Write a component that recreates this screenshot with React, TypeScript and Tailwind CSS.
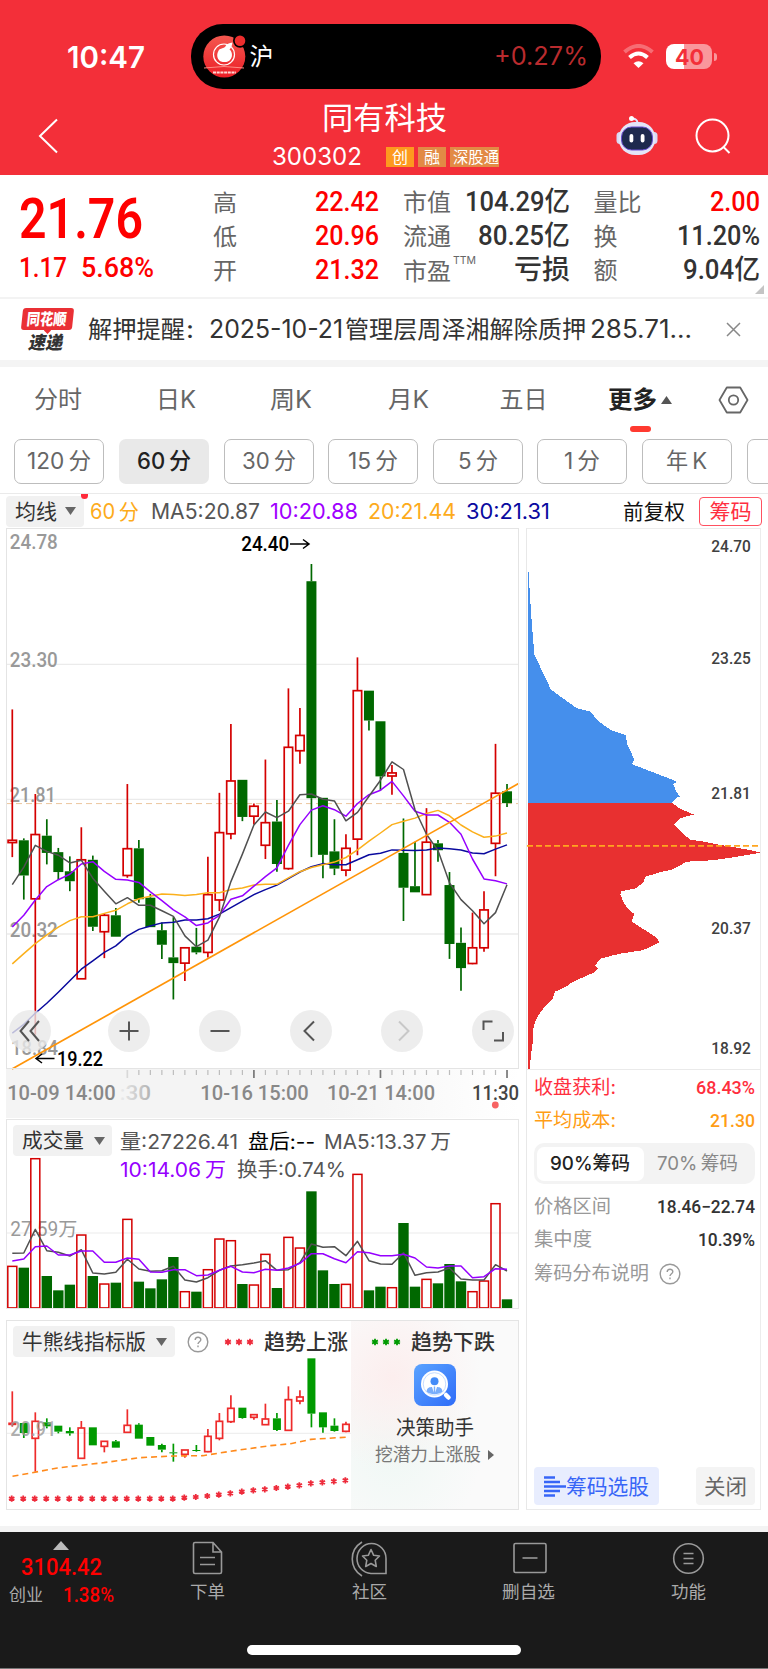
import { useLayoutEffect, useRef } from "react";
import type { ReactNode } from "react";

/* Text that is condensed or widened to fill the width of its box. */
function Fit({ className = "", children }: { className?: string; children: ReactNode }) {
  const outer = useRef<HTMLSpanElement>(null);
  const inner = useRef<HTMLSpanElement>(null);
  useLayoutEffect(() => {
    if (!outer.current || !inner.current) return;
    const ratio = outer.current.offsetWidth / inner.current.getBoundingClientRect().width;
    inner.current.style.transform = `scaleX(${ratio})`;
  }, []);
  return (
    <span className={`block shrink-0 whitespace-nowrap leading-none ${className}`}>
      <span ref={outer} className="block w-full">
        <span ref={inner} className="inline-block origin-left whitespace-pre align-top">{children}</span>
      </span>
    </span>
  );
}

const num = "font-['Roboto','Noto_Sans_CJK_SC',sans-serif]";

function Label({ x, y, w, size, fill, weight = 500, children }: { x: number; y: number; w: number; size: number; fill: string; weight?: number; children: string }) {
  return (
    <text x={x} y={y} textLength={w} lengthAdjust="spacingAndGlyphs" fontSize={size} fill={fill} fontWeight={weight} fontFamily="Roboto, 'Noto Sans CJK SC', sans-serif">
      {children}
    </text>
  );
}

type Candle = [string, number, number, number, number];
const X = (i: number) => 12.3 + 11.505 * i;

const candles: Candle[] = [
  ["R", 837, 843, 495, 881], ["G", 837, 929, 832, 992], ["R", 822, 990, 716, 1345], ["G", 825, 870, 782, 900],
  ["G", 868, 920, 857, 941], ["G", 918, 944, 879, 970], ["R", 888, 1199, 803, 1199], ["G", 888, 1063, 877, 1074],
  ["R", 1033, 1076, 1027, 1145], ["G", 1033, 1089, 1014, 1089], ["R", 859, 929, 690, 935], ["G", 858, 991, 836, 1000],
  ["G", 987, 1064, 977, 1064], ["G", 1072, 1110, 1052, 1147], ["G", 1143, 1158, 1038, 1253], ["R", 1118, 1158, 1118, 1205],
  ["G", 1115, 1130, 1066, 1135], ["R", 979, 1130, 880, 1143], ["R", 817, 993, 713, 1022], ["R", 682, 820, 533, 834],
  ["G", 679, 776, 679, 787], ["R", 748, 774, 741, 796], ["R", 791, 850, 626, 886], ["G", 788, 899, 732, 919],
  ["R", 594, 911, 440, 914], ["R", 563, 603, 491, 637], ["G", 160, 727, 115, 881], ["G", 726, 875, 726, 936],
  ["G", 866, 911, 782, 928], ["R", 858, 915, 821, 931], ["R", 446, 834, 359, 876], ["G", 446, 524, 446, 550],
  ["G", 526, 670, 526, 707], ["R", 661, 669, 640, 718], ["G", 870, 961, 780, 1048], ["G", 957, 973, 841, 973],
  ["R", 842, 979, 753, 979], ["G", 845, 863, 836, 893], ["G", 954, 1108, 920, 1147], ["G", 1105, 1171, 1065, 1230],
  ["R", 1118, 1159, 1026, 1161], ["R", 1019, 1118, 970, 1128], ["R", 714, 845, 585, 931], ["G", 709, 740, 690, 750],
];
const ma5 = [953, 907, 850, 866, 876, 896, 889, 936, 970, 1003, 987, 1007, 1007, 1021, 1036, 1087, 1115, 1098, 1038, 945, 873, 797, 763, 778, 761, 718, 716, 730, 734, 786, 764, 722, 680, 632, 652, 757, 821, 864, 948, 992, 1021, 1055, 1026, 953];
const ma10 = [1064, 1033, 993, 958, 940, 926, 899, 893, 918, 939, 941, 947, 972, 995, 1019, 1037, 1060, 1053, 1033, 991, 982, 957, 932, 909, 850, 796, 758, 747, 757, 774, 741, 718, 706, 683, 721, 761, 771, 771, 790, 821, 886, 938, 943, 951];
const ma20 = [1160, 1133, 1107, 1084, 1064, 1047, 1037, 1037, 1028, 1020, 1003, 990, 983, 977, 979, 981, 979, 974, 974, 966, 962, 954, 952, 952, 935, 919, 908, 901, 894, 882, 862, 839, 818, 796, 787, 779, 767, 759, 773, 797, 815, 829, 826, 818];
const ma30 = [1341, 1318, 1289, 1263, 1234, 1204, 1174, 1152, 1130, 1113, 1087, 1070, 1061, 1053, 1051, 1045, 1045, 1042, 1030, 1013, 996, 979, 966, 954, 937, 920, 906, 898, 901, 901, 888, 875, 871, 862, 863, 864, 862, 857, 859, 862, 870, 872, 860, 849];
const volumes = [617, 623, 294, 648, 691, 674, 523, 648, 670, 668, 476, 665, 685, 658, 591, 693, 695, 627, 535, 540, 672, 673, 581, 684, 530, 562, 394, 631, 672, 671, 341, 691, 680, 681, 489, 680, 656, 670, 612, 664, 693, 661, 429, 718];
const vol5 = [580, 579, 508, 572, 577, 588, 569, 639, 642, 637, 598, 627, 634, 632, 619, 660, 666, 653, 631, 618, 614, 609, 602, 631, 629, 608, 552, 562, 560, 587, 544, 602, 612, 613, 578, 646, 638, 636, 624, 657, 660, 660, 614, 633];
const vol10 = [603, 597, 560, 558, 585, 585, 573, 573, 607, 607, 594, 598, 636, 637, 629, 629, 647, 645, 631, 619, 636, 638, 628, 631, 624, 610, 581, 581, 596, 608, 575, 578, 587, 587, 583, 594, 621, 624, 618, 618, 653, 650, 626, 628];
const bull: Candle[] = [
  ["R", 343, 344, 247, 353], ["G", 342, 372, 342, 387], ["R", 337, 388, 310, 488], ["G", 340, 352, 328, 358], ["G", 350, 368, 350, 373],
  ["G", 366, 373, 355, 380], ["R", 357, 448, 336, 448], ["G", 355, 409, 355, 409], ["R", 397, 412, 397, 430], ["G", 397, 416, 393, 416],
  ["R", 349, 370, 301, 370], ["G", 347, 389, 343, 389], ["G", 384, 410, 384, 410], ["G", 408, 422, 404, 430], ["G", 430, 432, 404, 458],
  ["R", 423, 436, 423, 446], ["G", 423, 425, 408, 428], ["R", 382, 428, 360, 430], ["R", 337, 388, 312, 394], ["R", 298, 338, 259, 342],
  ["G", 296, 327, 296, 329], ["R", 317, 325, 317, 332], ["R", 330, 347, 284, 347], ["G", 328, 363, 312, 366], ["R", 272, 364, 232, 364],
  ["R", 264, 276, 244, 286], ["G", 148, 314, 148, 355], ["G", 310, 355, 310, 371], ["G", 350, 366, 328, 368], ["R", 346, 367, 338, 370],
];
const stars = [569, 569, 569, 569, 569, 569, 569, 569, 569, 569, 569, 569, 569, 569, 569, 566, 564, 561, 557, 553, 548, 544, 541, 537, 533, 529, 523, 520, 517, 514];

const yMain = (v: number) => 520 + v / 2.6133;
const yVol = (v: number) => 1060 + v / 3;
const yBull = (v: number) => 1310 + v / 3;
const path = (d: number[], y: (v: number) => number) => d.map((v, i) => `${X(i).toFixed(1)},${y(v).toFixed(1)}`).join(" ");

function Candles({ data, y, w, red, green }: { data: Candle[]; y: (v: number) => number; w: number; red: string; green: string }) {
  return (
    <>
      {data.map(([k, t, b, h, l], i) => {
        const x = X(i);
        const c = k === "R" ? red : green;
        const top = y(t);
        const bot = y(b);
        return (
          <g key={i} stroke={c} strokeWidth={1.7}>
            <line x1={x} x2={x} y1={y(h)} y2={Math.max(top, y(h))} />
            <line x1={x} x2={x} y1={Math.min(bot, y(l))} y2={y(l)} />
            {k === "R" ? (
              <rect x={x - w / 2 + 0.8} y={top} width={w - 1.6} height={Math.max(1, bot - top)} fill="none" />
            ) : (
              <rect x={x - w / 2} y={top} width={w} height={Math.max(1, bot - top)} fill={c} stroke="none" />
            )}
          </g>
        );
      })}
    </>
  );
}

function MainChart() {
  return (
    <svg className="block overflow-visible" width="513" height="541" viewBox="6 528 513 541">
      {[664.3, 799.3, 934].map((y) => <line key={y} x1="6" x2="519" y1={y} y2={y} stroke="#ebebeb" strokeWidth="1.3" />)}
      <line x1="6" x2="519" y1="803.6" y2="803.6" stroke="#ecc59c" strokeWidth="1" strokeDasharray="6 4" />
      <Label x={9.8} y={549.3} w={48} size={19.5} fill="#999">24.78</Label>
      <Label x={9.8} y={667} w={48} size={19.5} fill="#999">23.30</Label>
      <Label x={9.8} y={802} w={46} size={19.5} fill="#999">21.81</Label>
      <Label x={9.8} y={936.5} w={48} size={19.5} fill="#999">20.32</Label>
      <Label x={11} y={1054.5} w={47} size={19.5} fill="#999">18.84</Label>
      <Candles data={candles} y={yMain} w={10} red="#d40000" green="#006800" />
      <g fill="none" strokeWidth="1.5" strokeLinejoin="round">
        <polyline points={path(ma30, yMain)} stroke="#0a0a9e" />
        <polyline points={path(ma20, yMain)} stroke="#fbb01c" />
        <polyline points={path(ma10, yMain)} stroke="#9600ff" />
        <polyline points={path(ma5, yMain)} stroke="#505050" />
        <line x1="12" y1="1069" x2="519" y2="783.3" stroke="#ff9408" strokeWidth="1.7" />
      </g>
      <Label x={241.2} y={551.3} w={48} size={19.5} fill="#000">24.40</Label>
      <Label x={57} y={1066} w={46} size={19.5} fill="#000">19.22</Label>
      <g fill="none" stroke="#000" strokeWidth="1.5">
        <path d="M290 544H308.500M303 539.500L309 544L303 548.500" />
        <path d="M54.500 1058.500H36M42 1054L36 1058.500L42 1063" />
      </g>
    </svg>
  );
}

function TimeAxis() {
  return (
    <svg className="block overflow-visible" width="513" height="49" viewBox="6 1069 513 49">
      <defs>
        <linearGradient id="axisFade" x1="0" x2="1">
          <stop offset="0" stopColor="#f4f4f4" />
          <stop offset=".62" stopColor="#f4f4f4" />
          <stop offset="1" stopColor="#ffffff" />
        </linearGradient>
        <linearGradient id="labelFade" gradientUnits="userSpaceOnUse" x1="118" x2="152" y1="0" y2="0">
          <stop offset="0" stopColor="#f0f0f0" />
          <stop offset="1" stopColor="#b0b0b0" />
        </linearGradient>
      </defs>
      <rect x="6" y="1069" width="513" height="49" fill="url(#axisFade)" />
      {candles.map((_, i) => i >= 10 && (
        <line key={i} x1={X(i)} x2={X(i)} y1="1070" y2={i % 11 === 10 ? 1078 : 1075} stroke={i === 10 ? "#d8d8d8" : i % 11 === 10 ? "#777" : "#bdbdbd"} strokeWidth={i % 11 === 10 ? 1.7 : 1.2} />
      ))}
      <Label x={7.2} y={1100} w={108.5} size={19.5} fill="#888">10-09 14:00</Label>
      <Label x={119.5} y={1100} w={31.5} size={19.5} fill="url(#labelFade)">:30</Label>
      <Label x={200.3} y={1100} w={108.5} size={19.5} fill="#888">10-16 15:00</Label>
      <Label x={327} y={1100} w={108} size={19.5} fill="#888">10-21 14:00</Label>
      <Label x={472} y={1100} w={47} size={19.5} fill="#444">11:30</Label>
      <circle cx="495.3" cy="1105" r="3.4" fill="#f76262" />
    </svg>
  );
}

function VolumeChart() {
  return (
    <svg className="block" width="513" height="190" viewBox="6 1119 513 190">
      <line x1="6" x2="519" y1="1233" y2="1233" stroke="#ebebeb" />
      <Label x={10.3} y={1236} w={67} size={19.5} fill="#999" weight={400}>27.59万</Label>
      {volumes.map((v, i) => candles[i][0] === "R" ? (
        <rect key={i} x={X(i) - 4.5} y={yVol(v) + 0.7} width="9" height={1307.2 - yVol(v)} fill="none" stroke="#d40000" strokeWidth="1.5" />
      ) : (
        <rect key={i} x={X(i) - 5.2} y={yVol(v)} width="10.4" height={1308.5 - yVol(v)} fill="#006800" />
      ))}
      <g fill="none" strokeWidth="1.5" strokeLinejoin="round">
        <polyline points={path(vol5, yVol)} stroke="#505050" />
        <polyline points={path(vol10, yVol)} stroke="#9600ff" />
      </g>
    </svg>
  );
}

function Star({ x, y, s, c }: { x: number; y: number; s: number; c: string }) {
  return <path d={`M${x} ${y - s}V${y + s}M${x - s * 0.87} ${y - s / 2}L${x + s * 0.87} ${y + s / 2}M${x - s * 0.87} ${y + s / 2}L${x + s * 0.87} ${y - s / 2}`} stroke={c} strokeWidth="1.8" />;
}

function BullChart() {
  return (
    <svg className="block" width="513" height="190" viewBox="6 1321 513 190">
      <line x1="6" x2="519" y1="1434.3" y2="1434.3" stroke="#ebebeb" />
      <Candles data={bull} y={yBull} w={8} red="#ee2b2b" green="#009a00" />
      <Label x={10.3} y={1437.3} w={46} size={19.5} fill="#999999cc">20.91</Label>
      <polyline fill="none" stroke="#ff8a1c" strokeWidth="1.6" strokeDasharray="6 4" points={[[37, 502], [170, 477], [307, 461], [413, 446], [512, 441], [600, 440], [700, 424], [800, 410], [860, 404], [920, 391], [1033, 384]].map(([a, b]) => `${a / 2.958},${yBull(b)}`).join(" ")} />
      {stars.map((v, i) => <Star key={i} x={X(i) - 0.6} y={yBull(v)} s={3.1} c="#ee2b3b" />)}
    </svg>
  );
}

const upper = [[38, 205], [40, 205], [49, 330], [58, 430], [108, 522], [185, 570], [228, 580], [245, 600], [268, 616], [290, 628], [334, 641], [335, 662], [348, 685], [358, 705], [350, 716], [385, 728], [430, 743], [475, 758], [486, 763], [474, 768], [485, 790], [494, 801], [484, 804], [472, 817], [38, 817]];
const lower = [[38, 817], [472, 817], [490, 831], [515, 840], [536, 848], [495, 858], [477, 873], [498, 893], [525, 914], [560, 918], [594, 924], [660, 934], [700, 940], [737, 948], [690, 955], [660, 959], [615, 965], [560, 970], [515, 971], [490, 984], [470, 992], [430, 1000], [390, 1011], [386, 1025], [360, 1042], [320, 1048], [316, 1056], [328, 1082], [345, 1100], [358, 1108], [350, 1128], [390, 1150], [425, 1170], [433, 1182], [400, 1197], [375, 1204], [320, 1211], [290, 1217], [255, 1225], [241, 1243], [248, 1250], [240, 1260], [210, 1271], [170, 1287], [155, 1297], [120, 1311], [113, 1330], [80, 1360], [62, 1385], [54, 1410], [54, 1440], [47, 1480], [45, 1514], [38, 1514]];
const outline = (p: number[][]) => p.map(([a, b]) => `${(515 + a / 3).toFixed(1)},${(490 + b / 2.6133).toFixed(1)}`).join(" ");

function ChipProfile() {
  return (
    <svg className="block" width="235" height="541" viewBox="526 528 235 541">
      <polygon points={outline(upper)} fill="#458fec" shapeRendering="crispEdges" />
      <polygon points={outline(lower)} fill="#e83030" shapeRendering="crispEdges" />
      <line x1="527" x2="761" y1="845.9" y2="845.9" stroke="#ffa51f" strokeWidth="1.6" strokeDasharray="6 3" />
      {([["24.70", 552], ["23.25", 664.2], ["21.81", 799.2], ["20.37", 934.2], ["18.92", 1053.6]] as [string, number][]).map(([t, y]) => (
        <Label key={t} x={711.3} y={y} w={39.5} size={17} fill="#404040">{t}</Label>
      ))}
    </svg>
  );
}

function Question({ className }: { className: string }) {
  return (
    <svg className={className} width="22" height="22" viewBox="0 0 22 22" fill="none" stroke="#999" strokeWidth="1.4">
      <circle cx="11" cy="11" r="9.8" />
      <path d="M8.200 9C8.200 5.400 13.800 5.400 13.800 8.700C13.800 10.800 11 10.800 11 13.100M11 14.600V16.200" />
    </svg>
  );
}

function Caret({ className, up = false }: { className: string; up?: boolean }) {
  return <svg className={className} width="11" height="8" viewBox="0 0 11 8"><path d={up ? "M5.500 0L11 8H0Z" : "M0 0H11L5.500 8Z"} fill="currentColor" /></svg>;
}

function Header() {
  return (
    <header className="h-[175px] bg-[#f32f39] text-white">
      <div className="flex h-[90px] items-start">
        <Fit className="ml-[67px] mt-[42px] w-[78px] text-[30px] font-semibold">10:47</Fit>
        <div className="ml-[46px] mt-[24px] flex h-[65px] w-[410px] items-center rounded-[32px] bg-black">
          <svg className="ml-[11px] mb-[2px] shrink-0" width="46" height="50" viewBox="202 31 46 50">
            <defs><linearGradient id="appIcon" x1="0" y1="0" x2="0" y2="1"><stop offset="0" stopColor="#f4584f" /><stop offset="1" stopColor="#ec1d26" /></linearGradient></defs>
            <circle cx="224.3" cy="56.5" r="21" fill="url(#appIcon)" />
            <circle cx="224" cy="54.5" r="10.5" fill="none" stroke="#fff" strokeWidth="1.2" />
            <path d="M218.500 51C219 48 223 49 225 47C226.500 44 229 43 232.500 42.500C232 46 231 48 229.500 49.500C233 52 232.500 58 230 60C229 62.500 220.500 63 219 60C216.500 57.500 217 53 218.500 51Z" fill="#fff" />
            <path d="M204 68Q224 65 244 68" fill="none" stroke="#ff8b84" strokeWidth="1" />
            <path d="M213 72.500H236" stroke="#ffd8d4" strokeWidth="2" strokeDasharray="3 .7" />
            <circle cx="240" cy="40.7" r="7" fill="#000" />
            <circle cx="240" cy="40.7" r="5.3" fill="#ee2d2d" />
          </svg>
          <Fit className="ml-[1.5px] w-[24px] text-[24px]">沪</Fit>
          <Fit className="ml-[220px] w-[94px] text-[25px] text-[#b92b2e]">+0.27%</Fit>
        </div>
        <svg className="ml-[22px] mt-[44px]" width="31" height="25" viewBox="0 0 31 25" fill="none">
          <path d="M1.500 8Q15.500 -4 29.500 8" stroke="#fff" strokeOpacity=".3" strokeWidth="4" />
          <path d="M6.500 13.500Q15.500 5.500 24.500 13.500" stroke="#fff" strokeWidth="4" />
          <path d="M10.500 19.300Q15.500 15 20.500 19.300L15.500 24Z" fill="#fff" />
        </svg>
        <div className="ml-[12px] mt-[44px] flex h-[25px] w-[46px] items-center justify-center rounded-[8px] bg-[linear-gradient(to_right,#fff_40%,#f9979c_40%)]">
          <Fit className="w-[29px] text-[22px] font-bold text-[#f32f39]">40</Fit>
        </div>
        <div className="ml-[1.5px] mt-[53px] h-[8px] w-[3px] rounded-r-full bg-[#f9979c]" />
      </div>
      <div className="flex h-[85px] items-start">
        <svg className="ml-[38px] mt-[28px]" width="21" height="36" viewBox="0 0 21 36" fill="none" stroke="#fff" strokeWidth="2"><path d="M19 1.500L2 18L19 34.500" /></svg>
        <div className="ml-[213px] w-[344px]">
          <Fit className="ml-[49.5px] mt-[12px] w-[125px] text-[31px]">同有科技</Fit>
          <div className="mt-[12px] flex h-[24px] items-center">
            <Fit className="w-[90px] text-[24px]">300302</Fit>
            <div className="ml-[24px] flex gap-[4px] text-[16px]">
              <div className="flex h-[20px] w-[28px] items-center justify-center bg-[#fd991f]"><Fit className="w-[16px]">创</Fit></div>
              <div className="flex h-[20px] w-[28px] items-center justify-center bg-[#e28a45]"><Fit className="w-[16px]">融</Fit></div>
              <div className="flex h-[20px] w-[49px] items-center justify-end bg-[#e28a45]"><Fit className="w-[46px]">深股通</Fit></div>
            </div>
          </div>
        </div>
        <svg className="mt-[25px]" width="42" height="42" viewBox="0 0 42 42">
          <path d="M21.500 8C21.500 5 19.500 3.800 16.500 3.500" stroke="#e4e6ff" strokeWidth="1.8" fill="none" />
          <circle cx="15.5" cy="3.5" r="2.5" fill="#fff" />
          <rect x="0.5" y="17" width="7" height="12" rx="3.5" fill="#d9d9f4" />
          <rect x="34.5" y="17" width="7" height="12" rx="3.500" fill="#d9d9f4" />
          <rect x="2.500" y="7" width="37" height="33" rx="16.5" fill="#e4e5f8" />
          <rect x="5.5" y="12" width="31" height="23" rx="10" fill="#1e2a4e" stroke="#6a4fd0" />
          <rect x="13.5" y="19" width="3.8" height="8.5" rx="1.9" fill="#fff" />
          <rect x="24.7" y="19" width="3.8" height="8.5" rx="1.9" fill="#fff" />
        </svg>
        <svg className="ml-[35.5px] mt-[27px]" width="38" height="38" viewBox="0 0 38 38" fill="none" stroke="#fff" strokeWidth="2"><circle cx="18.5" cy="18.5" r="16" /><path d="M29.500 30L35.500 36" /></svg>
      </div>
    </header>
  );
}

function Quote() {
  return (
    <section className="relative flex h-[124px] border-b-2 border-[#f3f3f3] text-[#666]">
      <div className={`ml-[19px] w-[136px] text-[#fe0000] ${num}`}>
        <Fit className="mt-[17px] w-[124px] text-[55px] font-semibold">21.76</Fit>
        <div className="mt-[7px] flex gap-[14px] text-[28px] font-medium"><Fit className="w-[48px]">1.17</Fit><Fit className="w-[73px]">5.68%</Fit></div>
      </div>
      <div className="ml-[58px] mt-[11px] flex h-[102px] w-[24px] flex-col justify-between text-[23px]">
        <div className="flex h-[34px] items-center"><Fit className="w-[24px]">高</Fit></div>
        <div className="flex h-[34px] items-center"><Fit className="w-[24px]">低</Fit></div>
        <div className="flex h-[34px] items-center"><Fit className="w-[24px]">开</Fit></div>
      </div>
      <div className={`ml-[77.5px] mt-[10px] w-[65px] text-[27px] font-medium text-[#fe0000] ${num}`}>
        <div className="flex h-[34px] items-center"><Fit className="w-[64px]">22.42</Fit></div>
        <div className="flex h-[34px] items-center"><Fit className="w-[64px]">20.96</Fit></div>
        <div className="flex h-[34px] items-center"><Fit className="w-[64px]">21.32</Fit></div>
      </div>
      <div className="ml-[23.5px] mt-[11px] w-[76px] text-[24px]">
        <div className="flex h-[34px] items-center"><Fit className="w-[48px]">市值</Fit></div>
        <div className="flex h-[34px] items-center"><Fit className="w-[48px]">流通</Fit></div>
        <div className="flex h-[36px] items-center"><Fit className="w-[48px]">市盈</Fit><Fit className="mb-[24px] ml-[2px] w-[23px] text-[11px]">TTM</Fit></div>
      </div>
      <div className={`-ml-[16.5px] mt-[10px] flex w-[107px] flex-col items-end text-[27px] font-medium text-[#333] ${num}`}>
        <div className="flex h-[34px] items-center"><Fit className="w-[105px]">104.29亿</Fit></div>
        <div className="flex h-[34px] items-center"><Fit className="w-[92px]">80.25亿</Fit></div>
        <div className="flex h-[34px] items-center"><Fit className="w-[56px]">亏损</Fit></div>
      </div>
      <div className="ml-[24px] mt-[11px] w-[48px] text-[24px]">
        <div className="flex h-[34px] items-center"><Fit className="w-[48px]">量比</Fit></div>
        <div className="flex h-[34px] items-center"><Fit className="w-[24px]">换</Fit></div>
        <div className="flex h-[34px] items-center"><Fit className="w-[24px]">额</Fit></div>
      </div>
      <div className={`ml-[34px] mt-[10px] flex w-[84px] flex-col items-end text-[27px] font-medium text-[#333] ${num}`}>
        <div className="flex h-[34px] items-center text-[#fe0000]"><Fit className="w-[50px]">2.00</Fit></div>
        <div className="flex h-[34px] items-center"><Fit className="w-[83px]">11.20%</Fit></div>
        <div className="flex h-[34px] items-center"><Fit className="w-[77px]">9.04亿</Fit></div>
      </div>
      <svg className="absolute bottom-[3px] right-[4px]" width="9" height="9"><path d="M9 0V9H0Z" fill="#c4c4c4" /></svg>
    </section>
  );
}

function News() {
  return (
    <section className="flex h-[68px] items-center border-b-[7px] border-[#f4f4f4] text-[24px] text-[#333]">
      <div className="relative ml-[22px] w-[51px]">
        <div className="flex h-[22px] -skew-x-6 items-center justify-center rounded-[3px] bg-[#ea3035] text-[16px] font-black text-white"><Fit className="w-[41px]">同花顺</Fit></div>
        <div className="absolute left-[23px] top-[20px] size-[5px] rotate-45 bg-[#ea3035]" />
        <div className="mt-[4px] flex h-[18px] -skew-x-12 items-center justify-center text-[18px] font-black"><Fit className="w-[38px]">速递</Fit></div>
      </div>
      <Fit className="ml-[14.5px] w-[97px]">解押提醒</Fit>
      <Fit className="ml-[1px] w-[8px]">:</Fit>
      <Fit className="ml-[15px] w-[134px] text-[25px]">2025-10-21</Fit>
      <Fit className="ml-[2.5px] w-[241px]">管理层周泽湘解除质押</Fit>
      <Fit className="ml-[4px] w-[102px] text-[25px]">285.71...</Fit>
      <svg className="ml-[33.5px]" width="15" height="15" viewBox="0 0 15 15" stroke="#888" strokeWidth="1.5"><path d="M1 1L14 14M14 1L1 14" /></svg>
    </section>
  );
}

function Tabs() {
  return (
    <nav className="h-[68px] text-[24px] text-[#666]">
      <div className="flex h-[65px] items-center">
        <Fit className="ml-[34px] w-[48px]">分时</Fit>
        <Fit className="ml-[74px] w-[40px]">日K</Fit>
        <Fit className="ml-[74px] w-[42px]">周K</Fit>
        <Fit className="ml-[76px] w-[41px]">月K</Fit>
        <Fit className="ml-[70.5px] w-[48px]">五日</Fit>
        <div className="relative ml-[60.5px] flex items-center text-[#222]">
          <Fit className="w-[49px] font-bold">更多</Fit>
          <Caret up className="ml-[4px] text-[#555]" />
          <div className="absolute left-[22px] top-[38px] h-[6px] w-[21px] rounded-full bg-[#ff3a30]" />
        </div>
        <svg className="ml-[46px]" width="31" height="28" viewBox="0 0 31 28" fill="none" stroke="#666" strokeWidth="1.8"><path d="M8.800 1.500H22.200L29.500 14L22.200 26.500H8.800L1.500 14Z" strokeLinejoin="round" /><circle cx="15.5" cy="14" r="4.7" /></svg>
      </div>
    </nav>
  );
}

function Periods() {
  const b = "flex h-[45px] w-[90px] shrink-0 items-center justify-center rounded-[7px] border border-[#bdbdbd]";
  return (
    <div className="flex h-[59px] gap-[14.6px] overflow-hidden border-b border-[#eaeaea] pl-[14.4px] pt-[4px] text-[22.5px] text-[#666]">
      <div className={b}><Fit className="w-[64px]">{"120\u2009分"}</Fit></div>
      <div className="flex h-[45px] w-[90px] shrink-0 items-center justify-center rounded-[7px] bg-[#e9e9e9] font-medium text-[#222]"><Fit className="w-[54px]">{"60\u2009分"}</Fit></div>
      <div className={b}><Fit className="w-[54px]">{"30\u2009分"}</Fit></div>
      <div className={b}><Fit className="w-[50px]">{"15\u2009分"}</Fit></div>
      <div className={b}><Fit className="w-[40px]">{"5\u2009分"}</Fit></div>
      <div className={b}><Fit className="w-[36px]">{"1\u2009分"}</Fit></div>
      <div className={b}><Fit className="w-[41px]">{"年\u2009K"}</Fit></div>
      <div className={b} />
    </div>
  );
}

function Averages() {
  return (
    <div className="relative flex h-[34px] items-center text-[21px] text-[#555]">
      <div className="ml-[6px] flex h-[31px] w-[78px] items-center rounded-[4px] bg-[#f1f1f1] text-[#333]"><Fit className="ml-[9px] w-[42px]">均线</Fit><Caret className="ml-[8px] text-[#666]" /></div>
      <div className="absolute left-[81px] top-0 h-[5px] w-[7px] rounded-b-full bg-[#ff2a3a]" />
      <Fit className="ml-[6px] w-[49px] text-[#fdab1b]">{"60\u2009分"}</Fit>
      <Fit className="ml-[11.5px] w-[109px]">MA5:20.87</Fit>
      <Fit className="ml-[10px] w-[88px] text-[#a000ff]">10:20.88</Fit>
      <Fit className="ml-[10px] w-[88px] text-[#fdab1b]">20:21.44</Fit>
      <Fit className="ml-[10px] w-[84px] text-[#0a0aa0]">30:21.31</Fit>
      <Fit className="ml-[73px] w-[62px] text-[#111]">前复权</Fit>
      <div className="ml-[14.5px] flex h-[29px] w-[63px] items-center justify-center rounded-[4px] border border-[#ff5060] text-[#ff2e40]"><Fit className="w-[42px]">筹码</Fit></div>
    </div>
  );
}

function RoundButton({ d, faint = false, className = "" }: { d: string; faint?: boolean; className?: string }) {
  return (
    <div className={`flex size-[42px] items-center justify-center rounded-full bg-[#e8e8e8]/80 ${className}`}>
      <svg width="42" height="42" viewBox="0 0 42 42" fill="none" stroke={faint ? "#c8c8c8" : "#555"} strokeWidth="2"><path d={d} /></svg>
    </div>
  );
}

function Charts() {
  return (
    <div className="flex w-[513px] flex-col">
      <div className="relative outline-1 -outline-offset-1 outline-[#e4e4e4]">
        <MainChart />
        <div className="absolute bottom-[17px] left-[3px] flex gap-[49px]">
          <RoundButton className="mr-[8px]" d="M20 11L11.500 21L20 31M30 11L21.500 21L30 31" />
          <RoundButton d="M11.500 21H30.500M21 11.500V30.500" />
          <RoundButton d="M11.500 21H30.500" />
          <RoundButton d="M24 11.500L14.500 21L24 30.500" />
          <RoundButton faint d="M18 11.500L27.500 21L18 30.500" />
          <RoundButton d="M11.500 20V11.500H20.500M31 22V30.500H22" />
        </div>
      </div>
      <TimeAxis />
      <div className="relative mt-px outline-1 -outline-offset-1 outline-[#e6e6e6]">
        <VolumeChart />
        <div className="absolute left-[7px] top-[6px] flex text-[20px] text-[#555]">
          <div className="flex h-[31px] w-[99px] items-center rounded-[4px] bg-[#f1f1f1] text-[#333]"><Fit className="ml-[9px] w-[62px]">成交量</Fit><Caret className="ml-[9.5px] text-[#666]" /></div>
          <div className="ml-[8px] pt-[1px]">
            <div className="flex h-[31px] items-center"><Fit className="w-[118px]">量:27226.41</Fit><Fit className="ml-[10px] w-[67px] text-black">盘后:--</Fit><Fit className="ml-[9px] w-[127px]">{"MA5:13.37\u2009万"}</Fit></div>
            <div className="flex h-[26px] items-center"><Fit className="w-[106px] text-[#9600ff]">{"10:14.06\u2009万"}</Fit><Fit className="ml-[11px] w-[109px]">换手:0.74%</Fit></div>
          </div>
        </div>
      </div>
      <div className="relative mt-[11px] outline-1 -outline-offset-1 outline-[#e4e4e4]">
        <BullChart />
        <div className="absolute right-[1px] top-[1px] flex h-[188px] w-[167px] flex-col items-center bg-[radial-gradient(ellipse_at_25%_30%,#fceeee,transparent_50%),radial-gradient(ellipse_at_25%_70%,#f0f8f5,transparent_50%)] bg-[#fafafa] pt-[43px]">
          <svg width="42" height="42" viewBox="0 0 42 42">
            <defs><linearGradient id="helper" x1="0" y1="0" x2="1" y2="1"><stop offset="0" stopColor="#5ba3ff" /><stop offset="1" stopColor="#2f6cf8" /></linearGradient></defs>
            <rect width="42" height="42" rx="8" fill="url(#helper)" />
            <path d="M32 31L34.500 33.500" stroke="#fff" strokeWidth="4.5" strokeLinecap="round" />
            <circle cx="20.5" cy="20" r="13.5" fill="#fff" />
            <circle cx="20.5" cy="20" r="11.3" fill="#fff" stroke="#c5dcff" strokeWidth="1" />
            <circle cx="20.5" cy="17.3" r="4" fill="#438bf8" />
            <path d="M12.500 27.500C13 23.500 16 23 18 23L19.800 28.500V22.500H21.200V28.500L23 23C25 23 28 23.500 28.500 27.500C24.500 31 16.500 31 12.500 27.500Z" fill="#78adfb" />
          </svg>
          <Fit className="mt-[11.5px] w-[78px] text-[20px] text-[#333]">决策助手</Fit>
          <div className="mt-[8px] flex items-center text-[18px] text-[#777]"><Fit className="w-[106px]">挖潜力上涨股</Fit><svg className="ml-[7px]" width="6" height="10"><path d="M0 0L6 5L0 10Z" fill="#666" /></svg></div>
        </div>
        <div className="absolute left-[7px] top-[6px] flex items-center text-[21px] text-[#333]">
          <div className="flex h-[31px] w-[162px] items-center rounded-[4px] bg-[#f1f1f1]"><Fit className="ml-[9px] w-[124px]">牛熊线指标版</Fit><Caret className="ml-[10px] text-[#666]" /></div>
          <Question className="ml-[11.5px]" />
          <svg className="ml-[15.5px]" width="30" height="10"><Star x={4} y={5} s={3.3} c="#ee2b3b" /><Star x={15} y={5} s={3.3} c="#ee2b3b" /><Star x={26} y={5} s={3.3} c="#ee2b3b" /></svg>
          <Fit className="ml-[10px] w-[84px] font-medium">趋势上涨</Fit>
          <svg className="ml-[23px]" width="30" height="10"><Star x={4} y={5} s={3.3} c="#009a00" /><Star x={15} y={5} s={3.3} c="#009a00" /><Star x={26} y={5} s={3.3} c="#009a00" /></svg>
          <Fit className="ml-[10px] w-[84px] font-medium">趋势下跌</Fit>
        </div>
      </div>
    </div>
  );
}

function ChipPanel() {
  const row = "flex h-[33px] items-center justify-between";
  return (
    <aside className="ml-[7px] flex h-[982px] w-[235px] flex-col border-b border-[#eaeaea] shadow-[inset_1px_0_#e8e8e8,inset_-1px_1px_#ececec]">
      <ChipProfile />
      <div className="flex flex-1 flex-col border-t border-[#eaeaea] pl-[7.5px] pr-[6px] pt-[1px] text-[19px] text-[#999]">
        <div className={`${row} text-[#ff2e3d]`}><Fit className="w-[82px]">收盘获利:</Fit><Fit className={`w-[59px] text-[18px] font-medium ${num}`}>68.43%</Fit></div>
        <div className={`${row} text-[#ff9d15]`}><Fit className="w-[82px]">平均成本:</Fit><Fit className={`w-[45px] text-[18px] font-medium ${num}`}>21.30</Fit></div>
        <div className="mt-[6px] flex h-[41px] items-center rounded-[10px] bg-[#f3f3f3] pl-[3px] text-[#888]">
          <div className="flex h-[34px] w-[107px] items-center justify-center rounded-[7px] bg-white font-medium text-[#222]"><Fit className="w-[80px]">90%筹码</Fit></div>
          <Fit className="ml-[13px] w-[81px]">{"70%\u2009筹码"}</Fit>
        </div>
        <div className={`${row} mt-[6px]`}><Fit className="w-[77px]">价格区间</Fit><Fit className={`w-[98px] text-[18px] font-medium text-[#333] ${num}`}>18.46−22.74</Fit></div>
        <div className={row}><Fit className="w-[58px]">集中度</Fit><Fit className={`w-[57px] text-[18px] font-medium text-[#333] ${num}`}>10.39%</Fit></div>
        <div className="flex h-[35px] items-center"><Fit className="w-[115px]">筹码分布说明</Fit><Question className="ml-[10px]" /></div>
        <div className="mb-[4px] mt-auto flex justify-between text-[21px]">
          <div className="flex h-[38px] w-[125px] items-center rounded-[4px] bg-[#e8edfe] pl-[10px] text-[#3765f7]">
            <svg width="22" height="21" viewBox="0 0 22 21" stroke="#3765f7" strokeWidth="2.4"><path d="M0 1.500H11M0 6H16M0 10.500H22M0 15H16M0 19.500H11" /></svg>
            <Fit className="w-[83px]">筹码选股</Fit>
          </div>
          <div className="flex h-[38px] w-[59px] items-center justify-center rounded-[4px] bg-[#f4f4f4] text-[#666]"><Fit className="w-[43px]">关闭</Fit></div>
        </div>
      </div>
    </aside>
  );
}

function Footer() {
  const col = "flex flex-col items-center text-[17px]";
  const ic = { fill: "none", stroke: "#999", strokeWidth: 1.6 };
  return (
    <footer className="flex h-[137px] flex-col bg-[#1a1a1a] text-[#aaa]">
      <div className="flex h-[113px] items-start">
        <div className="w-[123px]">
          <svg className="ml-[53px] mt-[9px] block" width="16" height="9"><path d="M8 0L16 9H0Z" fill="#bbb" /></svg>
          <Fit className={`ml-[21px] mt-[5px] w-[81px] text-[24px] font-medium text-[#ff0000] ${num}`}>3104.42</Fit>
          <div className="mt-[6px] flex items-center"><Fit className="ml-[9px] w-[34px] text-[17px]">创业</Fit><Fit className={`ml-[20px] w-[51px] text-[20px] font-medium text-[#ff0000] ${num}`}>1.38%</Fit></div>
        </div>
        <div className={`${col} ml-[66px] mt-[9px] w-[36px]`}>
          <svg width="31" height="34" viewBox="0 0 31 34" {...ic}><path d="M3 1.500H21L29.500 11V31Q29.500 32.500 28 32.500H3Q1.500 32.500 1.500 31V3Q1.500 1.500 3 1.500ZM21 1.500V11H29.500M8 16.500H23M8 23.500H23" /></svg>
          <Fit className="mt-[9px] w-[35px]">下单</Fit>
        </div>
        <div className={`${col} ml-[126px] mt-[9px] w-[36px]`}>
          <svg width="36" height="36" viewBox="0 0 36 36" {...ic}><path d="M11 1C-2 9 -2 27 11 35M35 32.500H20A14.500 15 0 1 1 35 17.500Z" /><path d="M20 8.500L22.700 14.300L28.500 15L24.200 19.200L25.300 25.500L20 22.500L14.700 25.500L15.800 19.200L11.500 15L17.300 14.300Z" strokeLinejoin="round" /></svg>
          <Fit className="mt-[7px] w-[35px]">社区</Fit>
        </div>
        <div className={`${col} ml-[114px] mt-[9px] w-[54px]`}>
          <svg className="ml-[3px]" width="34" height="34" viewBox="0 0 34 34" {...ic}><rect x="1" y="2.5" width="32" height="29" rx="1.5" /><path d="M9.500 17H24.500" /></svg>
          <Fit className="mt-[9px] w-[53px]">删自选</Fit>
        </div>
        <div className={`${col} ml-[115.5px] mt-[9px] w-[36px]`}>
          <svg width="34" height="34" viewBox="0 0 34 34" {...ic}><circle cx="16.5" cy="17.5" r="14.8" /><path d="M11.500 12.500H21.500M11.500 17.500H21.500M11.500 22.500H21.500" /></svg>
          <Fit className="mt-[9px] w-[35px]">功能</Fit>
        </div>
      </div>
      <div className="mx-auto h-[10px] w-[274px] rounded-full bg-white" />
      <div className="mt-auto h-px bg-[#777]" />
    </footer>
  );
}

export default function App() {
  return (
    <main className="w-[768px] overflow-hidden bg-white font-['Inter','Noto_Sans_CJK_SC',sans-serif]">
      <Header />
      <Quote />
      <News />
      <Tabs />
      <Periods />
      <Averages />
      <div className="flex h-[998px] pl-[6px]">
        <Charts />
        <ChipPanel />
      </div>
      <div className="h-[6px] bg-[#f3f3f3]" />
      <Footer />
    </main>
  );
}
